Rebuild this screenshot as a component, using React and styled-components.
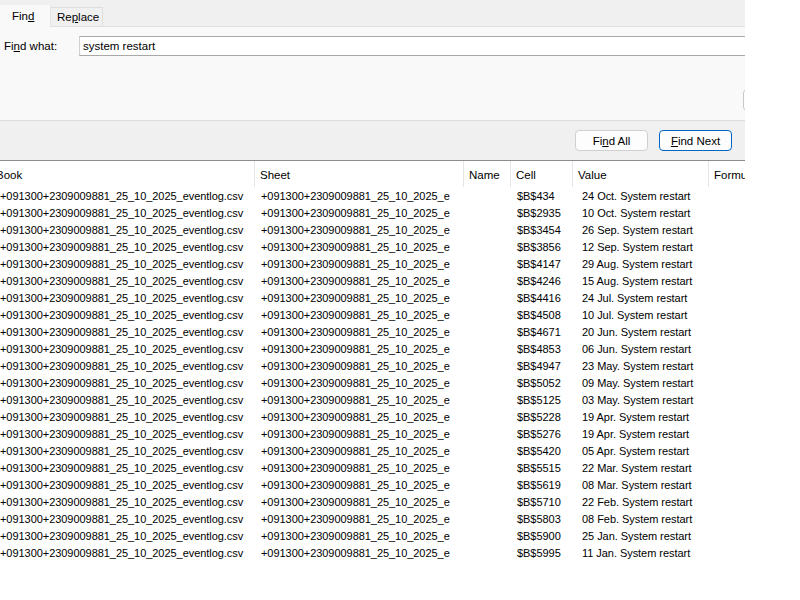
import React from 'react';
import styled, { createGlobalStyle } from 'styled-components';

const Global = createGlobalStyle`
  html, body { margin: 0; padding: 0; background: #ffffff; }
  body { font-family: "Liberation Sans", Arial, sans-serif; color: #000; }
`;

const Dialog = styled.div`
  width: 745px;
  height: 600px;
  overflow: hidden;
  display: flex;
  flex-direction: column;
  background: #ffffff;
`;

const TabStrip = styled.div`
  height: 26px;
  background: #f0f0f0;
  border-bottom: 1px solid #e0e0e0;
  display: flex;
  align-items: flex-end;
`;

const Tab = styled.div`
  box-sizing: border-box;
  font-size: 11.5px;
  display: flex;
  align-items: center;
  ${(p) =>
    p.active
      ? `
    width: 51px;
    height: 22px;
    margin-bottom: -1px;
    padding-left: 12px;
    background: #f9f9f9;
    border-right: 1px solid #e4e4e4;
  `
      : `
    width: 52px;
    height: 19px;
    padding-left: 6px;
    background: #f0f0f0;
    border: 1px solid #dedede;
    border-bottom: none;
    border-left: none;
  `}
`;

const Panel = styled.div`
  height: 93px;
  background: #f9f9f9;
  border-bottom: 1px solid #dcdcdc;
  display: flex;
  flex-direction: column;
`;

const FieldRow = styled.div`
  display: flex;
  align-items: center;
  margin-top: 9px;
  padding-left: 4px;
`;

const Label = styled.label`
  width: 75px;
  font-size: 11.5px;
`;

const Input = styled.div`
  flex: 1;
  height: 18px;
  background: #ffffff;
  border-top: 1px solid #a8a8a8;
  border-bottom: 1px solid #a8a8a8;
  border-left: 1px solid #d0d0d0;
  padding-left: 3px;
  font-size: 11.5px;
  display: flex;
  align-items: center;
`;

const OptionsRow = styled.div`
  display: flex;
  margin-top: 33px;
  padding-left: 743px;
`;

const OptionsButton = styled.div`
  width: 60px;
  height: 20px;
  border: 1px solid #c8c8c8;
  border-radius: 4px;
  background: #fdfdfd;
  flex-shrink: 0;
`;

const ButtonBar = styled.div`
  height: 39px;
  background: #f0f0f0;
  border-bottom: 1px solid #8c8c92;
  display: flex;
  justify-content: flex-end;
  align-items: center;
  gap: 11px;
  padding-right: 13px;
`;

const Button = styled.div`
  box-sizing: border-box;
  width: 73px;
  height: 21px;
  border-radius: 4px;
  background: #fdfdfd;
  border: 1px solid ${(p) => (p.primary ? '#0067c0' : '#d0d0d0')};
  font-size: 11.5px;
  display: flex;
  align-items: center;
  justify-content: center;
`;

const Results = styled.div`
  flex: 1;
  margin-left: -7px;
  width: 820px;
`;

const Row = styled.div`
  display: grid;
  grid-template-columns: 261px 209px 47px 62px 136px 1fr;
  height: ${(p) => (p.header ? '26px' : '17px')};
  align-items: center;
`;

const HeadCell = styled.div`
  font-size: 11.5px;
  padding-left: ${(p) => (p.first ? 3 : 5)}px;
  padding-top: 1px;
  box-sizing: border-box;
  height: 100%;
  display: flex;
  align-items: center;
  border-left: ${(p) => (p.first ? 'none' : '1px solid #e5e5e5')};
  white-space: nowrap;
  overflow: hidden;
`;

const Cell = styled.div`
  font-size: 11px;
  letter-spacing: -0.05px;
  padding-left: ${(p) => p.pad || 7}px;
  white-space: nowrap;
  overflow: hidden;
`;

const U = styled.span`
  text-decoration: underline;
  text-underline-offset: 1px;
`;

const book = '+091300+2309009881_25_10_2025_eventlog.csv';
const sheet = '+091300+2309009881_25_10_2025_e';

const hits = [
  ['$B$434', '24 Oct.'],
  ['$B$2935', '10 Oct.'],
  ['$B$3454', '26 Sep.'],
  ['$B$3856', '12 Sep.'],
  ['$B$4147', '29 Aug.'],
  ['$B$4246', '15 Aug.'],
  ['$B$4416', '24 Jul.'],
  ['$B$4508', '10 Jul.'],
  ['$B$4671', '20 Jun.'],
  ['$B$4853', '06 Jun.'],
  ['$B$4947', '23 May.'],
  ['$B$5052', '09 May.'],
  ['$B$5125', '03 May.'],
  ['$B$5228', '19 Apr.'],
  ['$B$5276', '19 Apr.'],
  ['$B$5420', '05 Apr.'],
  ['$B$5515', '22 Mar.'],
  ['$B$5619', '08 Mar.'],
  ['$B$5710', '22 Feb.'],
  ['$B$5803', '08 Feb.'],
  ['$B$5900', '25 Jan.'],
  ['$B$5995', '11 Jan.'],
];

export default function App() {
  return (
    <>
      <Global />
      <Dialog>
        <TabStrip>
          <Tab active>
            Fin<U>d</U>
          </Tab>
          <Tab>
            Re<U>p</U>lace
          </Tab>
        </TabStrip>
        <Panel>
          <FieldRow>
            <Label>
              Fi<U>n</U>d what:
            </Label>
            <Input>system restart</Input>
          </FieldRow>
          <OptionsRow>
            <OptionsButton />
          </OptionsRow>
        </Panel>
        <ButtonBar>
          <Button>
            Fi<U>n</U>d All
          </Button>
          <Button primary>
            <U>F</U>ind Next
          </Button>
        </ButtonBar>
        <Results>
          <Row header>
            <HeadCell first>Book</HeadCell>
            <HeadCell>Sheet</HeadCell>
            <HeadCell>Name</HeadCell>
            <HeadCell>Cell</HeadCell>
            <HeadCell>Value</HeadCell>
            <HeadCell>Formula</HeadCell>
          </Row>
          {hits.map(([cell, date]) => (
            <Row key={cell}>
              <Cell>{book}</Cell>
              <Cell>{sheet}</Cell>
              <Cell />
              <Cell>{cell}</Cell>
              <Cell pad={10}>{date} System restart</Cell>
              <Cell />
            </Row>
          ))}
        </Results>
      </Dialog>
    </>
  );
}
